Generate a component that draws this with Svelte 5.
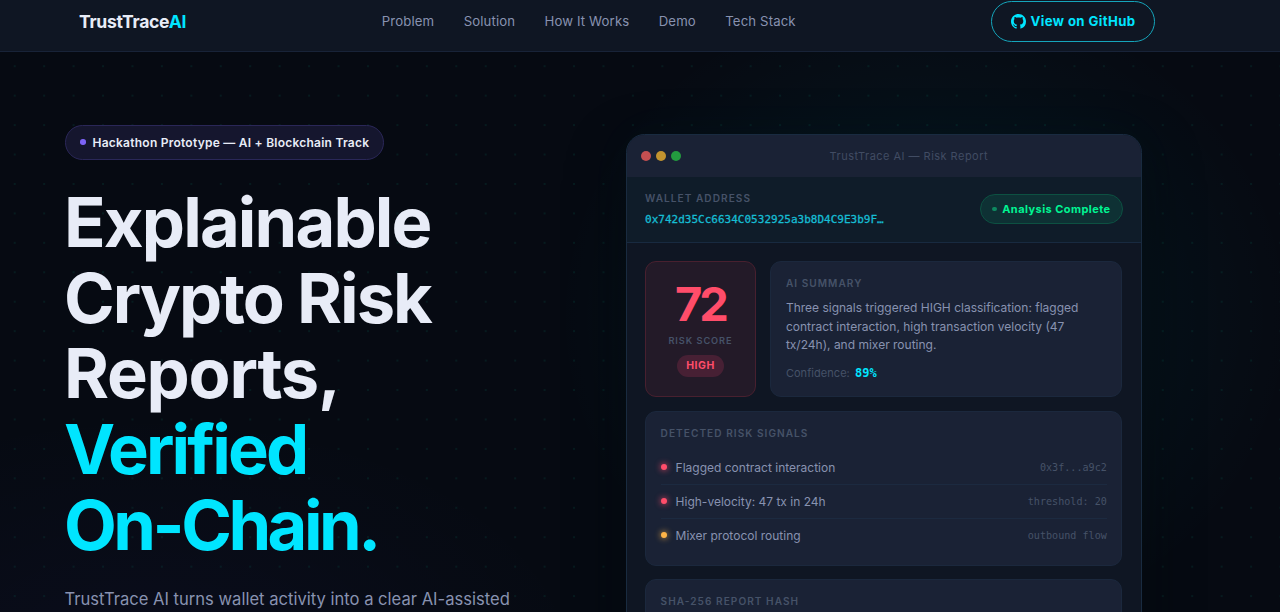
<script>
    const links = ["Problem", "Solution", "How It Works", "Demo", "Tech Stack"];

    const headline = [
        { text: "Explainable", name: "explainable" },
        { text: "Crypto Risk", name: "crypto" },
        { text: "Reports,", name: "reports" },
        { text: "Verified", name: "verified", accent: true },
        { text: "On-Chain.", name: "onchain", accent: true }
    ];

    const signals = [
        { label: "Flagged contract interaction", meta: "0x3f...a9c2", level: "high" },
        { label: "High-velocity: 47 tx in 24h", meta: "threshold: 20", level: "high" },
        { label: "Mixer protocol routing", meta: "outbound flow", level: "medium" }
    ];
</script>

<style>
    :global(body) {
        background-color: #060a12;
        overflow: hidden;
    }
    .page {
        width: 1280px;
        height: 612px;
        overflow: hidden;
        display: flex;
        flex-direction: column;
        color: #e8ecf7;
        font-family: Inter, sans-serif;
    }
    nav {
        box-sizing: border-box;
        flex: none;
        height: 52px;
        padding: 1px 125px 9px 79px;
        display: grid;
        grid-template-columns: 302.8px 1fr auto;
        align-items: center;
        background-color: #0f1623;
        border-bottom: 1px solid #182338;
    }
    .logo {
        font-size: 17.6px;
        font-weight: 700;
        letter-spacing: -0.3px;
    }
    .accent {
        color: #00e5ff;
    }
    .links {
        display: flex;
        gap: 29.4px;
        padding-bottom: 2px;
    }
    .links a {
        color: #8892b0;
        font-size: 13.2px;
        letter-spacing: 0.12px;
        white-space: nowrap;
    }
    .github {
        box-sizing: border-box;
        width: 164px;
        height: 41px;
        display: flex;
        align-items: center;
        justify-content: center;
        gap: 5px;
        border: 1px solid #15a5bb;
        border-radius: 21px;
        padding-bottom: 1px;
        color: #00e5ff;
        font-size: 13.2px;
        font-weight: 700;
        letter-spacing: 0.38px;
        white-space: nowrap;
    }
    .github svg {
        width: 15px;
        height: 15px;
        fill: #00e5ff;
    }
    .hero {
        flex: 1;
        min-height: 0;
        box-sizing: border-box;
        display: grid;
        grid-template-columns: 561px 516px;
        padding-left: 65px;
        background-color: #060a12;
        background-image:
            radial-gradient(circle, rgba(0, 229, 180, 0.08) 0.9px, transparent 1.3px),
            radial-gradient(ellipse 370px 330px at 925px 265px, rgba(0, 229, 255, 0.07), transparent),
            radial-gradient(ellipse 440px 260px at 150px 620px, rgba(108, 80, 255, 0.045), transparent);
        background-size: 29.44px 29.44px, auto, auto;
        background-position: 0 -0.5px, 0 0, 0 0;
    }
    .copy {
        padding-top: 73px;
    }
    .badge {
        box-sizing: border-box;
        width: 319.4px;
        height: 35px;
        display: flex;
        align-items: center;
        gap: 7px;
        padding: 0 0 1px 14px;
        background-color: #15162e;
        border: 1px solid #2a2758;
        border-radius: 18px;
        font-size: 12px;
        font-weight: 600;
        letter-spacing: 0.24px;
        white-space: nowrap;
    }
    .badge i {
        width: 5.5px;
        height: 5.5px;
        border-radius: 50%;
        background-color: #7c63f5;
    }
    h1 {
        margin: 25px 0 0 -1px;
        font-size: 68.6px;
        font-weight: 700;
        line-height: 75.7px;
        white-space: nowrap;
    }
    h1 span {
        display: block;
    }
    .explainable { letter-spacing: -1.85px; }
    .crypto { letter-spacing: -2px; }
    .reports { letter-spacing: -1.25px; }
    .verified { letter-spacing: -2.9px; }
    .onchain { letter-spacing: -3.5px; }
    .lead {
        margin: 21.5px 0 0 -0.5px;
        color: #8892b0;
        font-size: 16.58px;
        line-height: 28px;
        white-space: nowrap;
    }
    .card {
        box-sizing: border-box;
        margin-top: 82px;
        height: 600px;
        overflow: hidden;
        background-color: #0f1623;
        border: 1px solid #192b40;
        border-radius: 18.4px;
        box-shadow: 0 20px 60px rgba(0, 0, 0, 0.4), 0 0 50px rgba(0, 229, 255, 0.03);
    }
    .titlebar {
        height: 42px;
        display: flex;
        align-items: center;
        padding-left: 14px;
        gap: 5px;
        background-color: #1a2235;
    }
    .titlebar i {
        width: 10px;
        height: 10px;
        margin-bottom: 1px;
        border-radius: 50%;
    }
    .red { background-color: #c44f51; }
    .yellow { background-color: #c2932f; }
    .green { background-color: #239b3f; }
    .titlebar span {
        margin-left: 143.6px;
        color: #414c63;
        font-size: 11px;
        letter-spacing: 0.47px;
        white-space: nowrap;
    }
    .wallet {
        box-sizing: border-box;
        height: 66px;
        display: flex;
        align-items: center;
        justify-content: space-between;
        padding: 0 18.4px 0 18px;
        background-color: #0f1c29;
        border-bottom: 1px solid #182a40;
    }
    .label {
        color: #465268;
        font-size: 10.1px;
        font-weight: 600;
        letter-spacing: 1.04px;
        line-height: 12px;
        white-space: nowrap;
    }
    .address {
        margin-top: 9px;
        color: #16bdd3;
        font-family: "DejaVu Sans Mono", monospace;
        font-size: 11.03px;
        line-height: 14px;
        -webkit-text-stroke: 0.3px #16bdd3;
    }
    .status {
        box-sizing: border-box;
        width: 142.5px;
        height: 30px;
        display: flex;
        align-items: center;
        gap: 5.5px;
        margin-bottom: 1px;
        padding-left: 11px;
        background-color: #0e3134;
        border: 1px solid #0d5142;
        border-radius: 15px;
        color: #00f593;
        font-size: 11px;
        font-weight: 700;
        letter-spacing: 0.44px;
        white-space: nowrap;
    }
    .status i {
        width: 4.6px;
        height: 4.6px;
        border-radius: 50%;
        background-color: #0d8a60;
    }
    .report {
        padding: 18.4px 18.6px 18.4px 18px;
        display: flex;
        flex-direction: column;
        gap: 14.6px;
    }
    .overview {
        height: 135.4px;
        display: grid;
        grid-template-columns: 111px 1fr;
        gap: 14.3px;
    }
    .score {
        box-sizing: border-box;
        height: 135.4px;
        display: flex;
        flex-direction: column;
        align-items: center;
        padding-top: 18px;
        background-color: #231a28;
        border: 1px solid #48202f;
        border-radius: 11px;
    }
    .score strong {
        color: #ff4d6a;
        font-size: 47px;
        line-height: 47px;
        letter-spacing: -3px;
    }
    .score .label {
        margin-top: 8px;
        font-size: 9.2px;
        letter-spacing: 0.95px;
    }
    .score em {
        margin-top: 8px;
        padding: 0 9.2px;
        border-radius: 11px;
        background-color: #472034;
        color: #ff4d6a;
        font-size: 10.5px;
        font-style: normal;
        font-weight: 700;
        line-height: 22px;
        letter-spacing: 0.5px;
    }
    .panel {
        box-sizing: border-box;
        background-color: #1a2235;
        border: 1px solid #1b283d;
        border-radius: 11px;
        padding: 15px 14.6px 10px;
    }
    .summary p {
        margin: 10px 0 0;
        color: #8892b0;
        font-size: 12px;
        line-height: 18.4px;
        white-space: nowrap;
    }
    .confidence {
        margin-top: 9.3px;
        color: #465268;
        font-size: 11px;
        line-height: 18px;
        letter-spacing: 0.05px;
    }
    .confidence b {
        margin-left: 2px;
        color: #00e5ff;
        font-family: "DejaVu Sans Mono", monospace;
        font-size: 12px;
    }
    .signals {
        height: 154.5px;
        padding-top: 14.4px;
    }
    .signals ul {
        margin: 12px 0 0;
        padding: 0;
        list-style: none;
    }
    .signals li {
        box-sizing: border-box;
        height: 34px;
        display: flex;
        align-items: center;
        gap: 9px;
        color: #8892b0;
        font-size: 12px;
        border-bottom: 1px solid #1c2a40;
    }
    .signals li:last-child {
        border-bottom-color: transparent;
    }
    .signals i {
        width: 6px;
        height: 6px;
        border-radius: 50%;
    }
    .high { background-color: #ff4d6a; box-shadow: 0 0 6px #ff4d6a; }
    .medium { background-color: #ffb547; box-shadow: 0 0 6px #ffb547; }
    .signals code {
        margin-left: auto;
        color: #465268;
        font-family: "DejaVu Sans Mono", monospace;
        font-size: 10.1px;
    }
    .hash {
        height: 90px;
        margin-top: -1.2px;
    }
</style>

<div class="page">
    <nav>
        <div class="logo">TrustTrace<span class="accent">AI</span></div>
        <div class="links">
            {#each links as link}
                <a>{link}</a>
            {/each}
        </div>
        <div class="github">
            <svg viewBox="0 0 16 16"><path d="M8 0C3.58 0 0 3.58 0 8c0 3.54 2.29 6.53 5.47 7.59.4.07.55-.17.55-.38 0-.19-.01-.82-.01-1.49-2.01.37-2.53-.49-2.69-.94-.09-.23-.48-.94-.82-1.13-.28-.15-.68-.52-.01-.53.63-.01 1.08.58 1.23.82.72 1.21 1.87.87 2.33.66.07-.52.28-.87.51-1.07-1.78-.2-3.64-.89-3.64-3.95 0-.87.31-1.59.82-2.15-.08-.2-.36-1.02.08-2.12 0 0 .67-.21 2.2.82.64-.18 1.32-.27 2-.27s1.36.09 2 .27c1.53-1.04 2.2-.82 2.2-.82.44 1.1.16 1.92.08 2.12.51.56.82 1.27.82 2.15 0 3.07-1.87 3.75-3.65 3.95.29.25.54.73.54 1.48 0 1.07-.01 1.93-.01 2.2 0 .21.15.46.55.38A8.01 8.01 0 0 0 16 8c0-4.42-3.58-8-8-8z"/></svg>
            View on GitHub
        </div>
    </nav>

    <main class="hero">
        <section class="copy">
            <div class="badge"><i></i>Hackathon Prototype — AI + Blockchain Track</div>
            <h1>
                {#each headline as line}
                    <span class={line.name} class:accent={line.accent}>{line.text}</span>
                {/each}
            </h1>
            <p class="lead">TrustTrace AI turns wallet activity into a clear AI-assisted</p>
        </section>

        <section class="card">
            <div class="titlebar">
                <i class="red"></i><i class="yellow"></i><i class="green"></i>
                <span>TrustTrace AI — Risk Report</span>
            </div>
            <div class="wallet">
                <div>
                    <div class="label">WALLET ADDRESS</div>
                    <div class="address">0x742d35Cc6634C0532925a3b8D4C9E3b9F…</div>
                </div>
                <div class="status"><i></i>Analysis Complete</div>
            </div>
            <div class="report">
                <div class="overview">
                    <div class="score">
                        <strong>72</strong>
                        <div class="label">RISK SCORE</div>
                        <em>HIGH</em>
                    </div>
                    <div class="panel summary">
                        <div class="label">AI SUMMARY</div>
                        <p>Three signals triggered HIGH classification: flagged<br>contract interaction, high transaction velocity (47<br>tx/24h), and mixer routing.</p>
                        <div class="confidence">Confidence: <b>89%</b></div>
                    </div>
                </div>
                <div class="panel signals">
                    <div class="label">DETECTED RISK SIGNALS</div>
                    <ul>
                        {#each signals as signal}
                            <li><i class={signal.level}></i>{signal.label}<code>{signal.meta}</code></li>
                        {/each}
                    </ul>
                </div>
                <div class="panel hash">
                    <div class="label">SHA-256 REPORT HASH</div>
                </div>
            </div>
        </section>
    </main>
</div>
